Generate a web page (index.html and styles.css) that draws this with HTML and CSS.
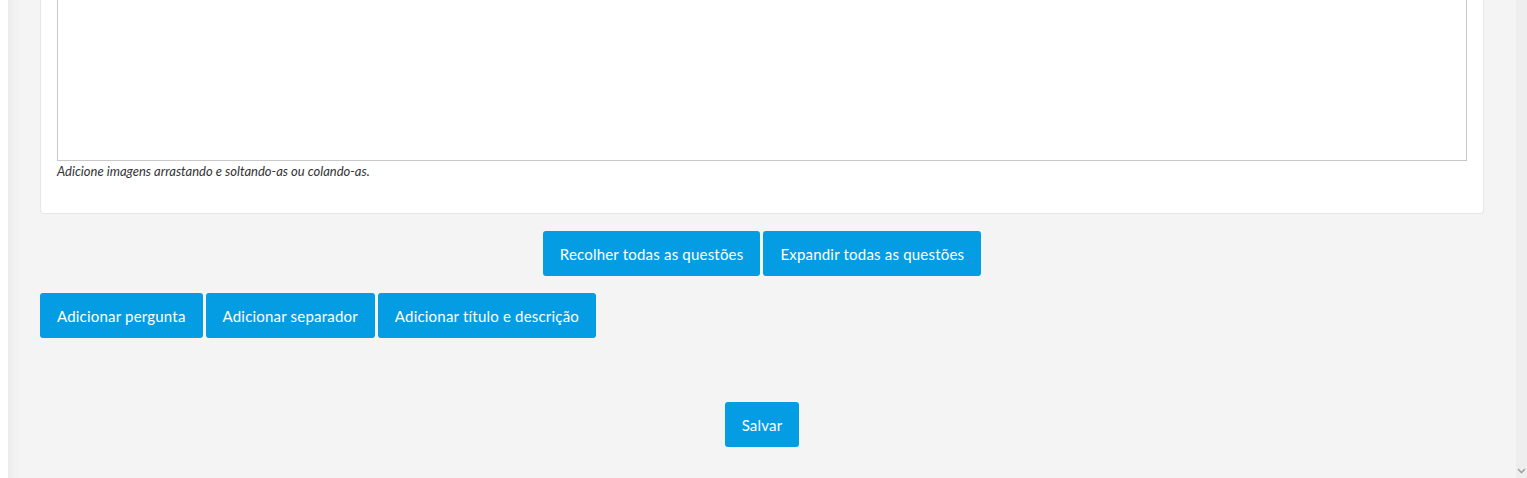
FILE: index.html
```html
<!DOCTYPE html>
<html lang="pt">
<head>
<meta charset="utf-8">
<link rel="stylesheet" href="styles.css">
<title>Editor</title>
</head>
<body>
<div class="page">
  <main class="main">
    <section class="card">
      <div class="editor"></div>
      <p class="hint">Adicione imagens arrastando e soltando-as ou colando-as.</p>
    </section>
    <div class="row center first">
      <button class="btn">Recolher todas as questões</button>
      <button class="btn">Expandir todas as questões</button>
    </div>
    <div class="row">
      <button class="btn">Adicionar pergunta</button>
      <button class="btn">Adicionar separador</button>
      <button class="btn">Adicionar título e descrição</button>
    </div>
    <div class="row center save">
      <button class="btn">Salvar</button>
    </div>
  </main>
  <div class="scrollbar">
    <svg class="arrow" width="9" height="6" viewBox="0 0 9 6"><path d="M1 1 L4.5 4.5 L8 1" fill="none" stroke="#a3a3a3" stroke-width="1.6"/></svg>
  </div>
</div>
</body>
</html>
```

FILE: styles.css
```css
html, body {
  margin: 0;
  padding: 0;
  background: #ffffff;
}
body {
  font-family: "Source Sans Pro", Lato, "Liberation Sans", sans-serif;
  color: #333;
}
.page {
  display: flex;
  height: 478px;
  padding-left: 8px;
  box-sizing: border-box;
  overflow: hidden;
}
.main {
  flex: 1;
  background: linear-gradient(to right, #ececec 0px, #f4f4f4 10px, #f4f4f4 100%);
  padding: 0 32px;
  min-width: 0;
}
.card {
  background: #fff;
  border: 1px solid #e6e6e6;
  border-top: none;
  border-radius: 0 0 4px 4px;
  padding: 0 16px 34px;
}
.editor {
  height: 161px;
  border: 1px solid #c8c8c8;
  border-top: none;
  box-sizing: border-box;
  background: #fff;
}
.hint {
  margin: 3px 0 0;
  font-size: 13px;
  line-height: 15px;
  font-style: italic;
  color: #333;
}
.row {
  display: flex;
  gap: 3px;
  margin-top: 17px;
}
.center { justify-content: center; }
.row.save { margin-top: 64px; }
.btn {
  font-family: inherit;
  font-size: 15px;
  letter-spacing: 0.2px;
  line-height: 20px;
  height: 45px;
  padding: 0 17px;
  color: #fff;
  background: #049de4;
  border: none;
  border-radius: 3px;
  cursor: pointer;
  white-space: nowrap;
}
.scrollbar {
  width: 11px;
  background: #eeeeee;
  display: flex;
  flex-direction: column;
  justify-content: flex-end;
  align-items: center;
  padding-bottom: 4px;
}
.arrow { display: block; }
```
